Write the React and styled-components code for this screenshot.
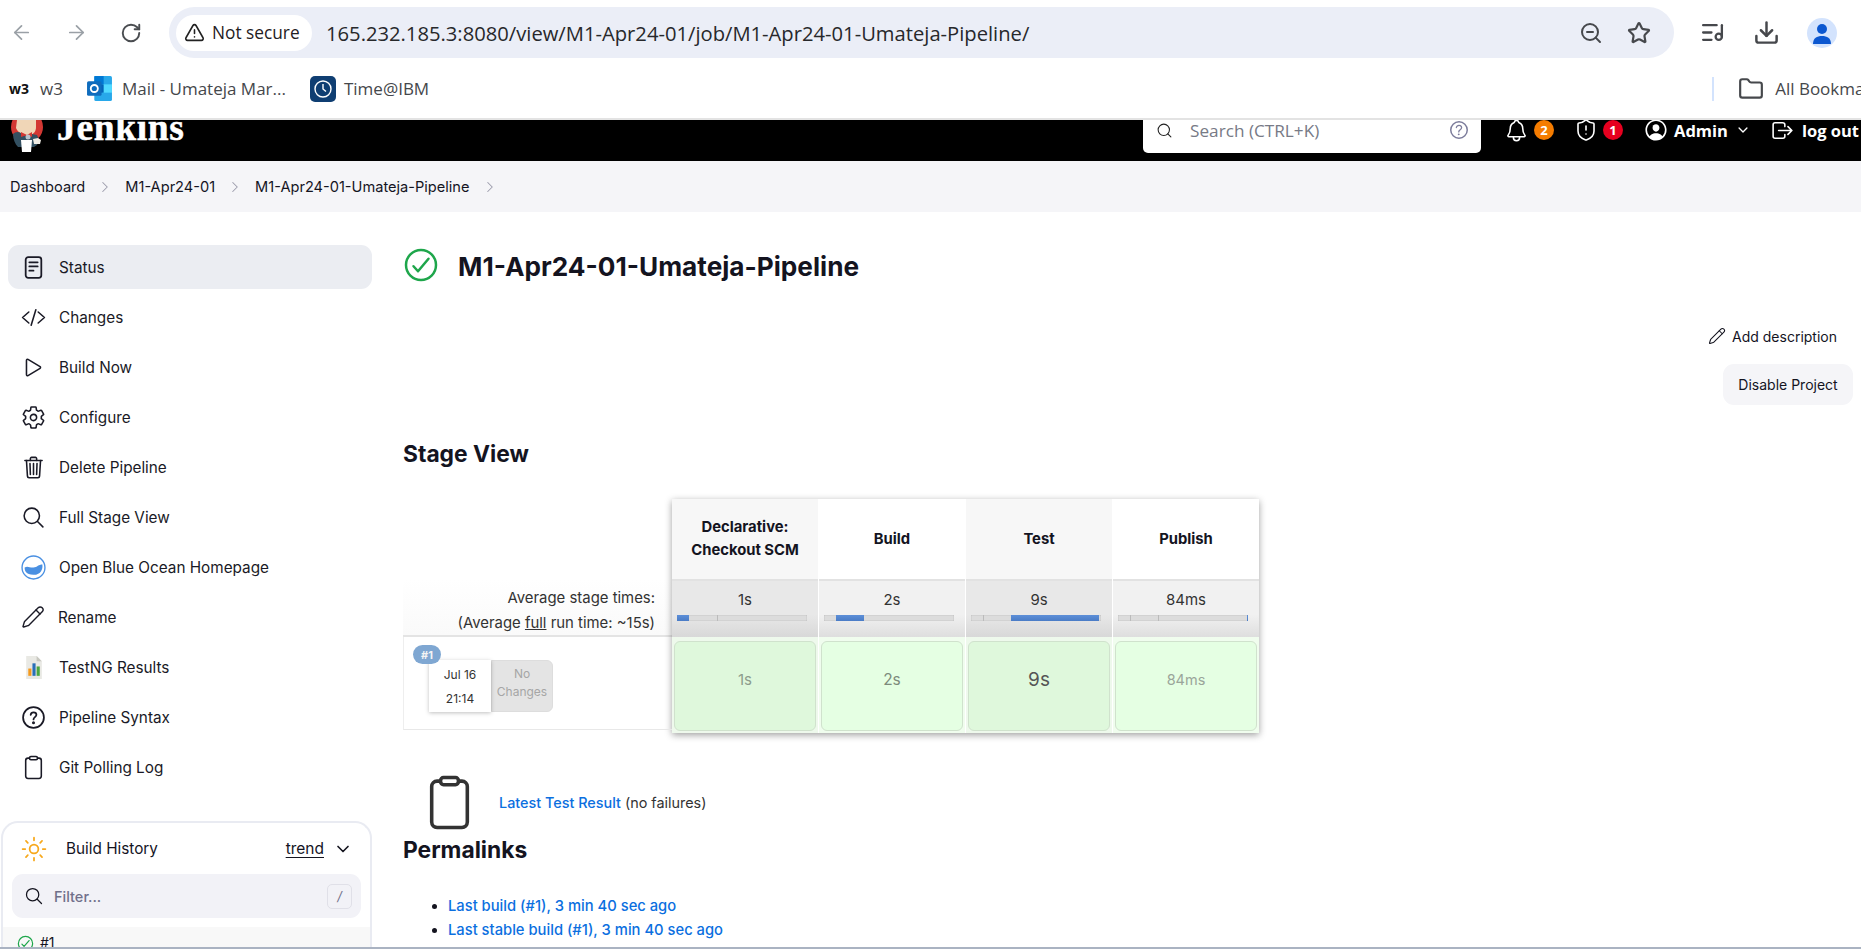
import React from "react";
import styled, { createGlobalStyle } from "styled-components";
import { ArrowLeft, ArrowRight, RotateCw, ZoomOut, Star, ListMusic, Download, TriangleAlert, Folder, Search as LSearch, ChevronDown, ChevronRight, Pencil, ShieldAlert } from "lucide-react";
import {
  IoCodeSlashOutline, IoPlayOutline, IoSettingsOutline, IoTrashOutline, IoSearchOutline,
  IoHelpCircleOutline, IoClipboardOutline, IoSunnyOutline, IoCheckmarkCircleOutline,
  IoNotificationsOutline, IoPersonCircleOutline, IoLogOutOutline, IoChevronDownOutline,
} from "react-icons/io5";

const Global = createGlobalStyle`
  html, body { margin: 0; padding: 0; background: #fff; overflow: hidden; }
  * { box-sizing: border-box; }
`;
const Page = styled.div`
  width: 1861px; height: 949px; overflow: hidden; display: flex; flex-direction: column;
  font-family: Inter, "Noto Sans", sans-serif; color: #14141f; background: #fff;
`;
const Toolbar = styled.div`
  height: 69px; flex: none; display: flex; align-items: center; padding: 0 0 4px 9px; color: #5f6368;
`;
const NavBtn = styled.span`
  display: flex; width: 25px; justify-content: center; margin-right: ${p => p.$gap}px;
  color: ${p => p.$dim ? "#9aa0a6" : "#4a4d51"};
`;
const AddressBar = styled.div`
  width: 1505px; height: 51px; margin-left: 26px; background: #ebeef7; border-radius: 26px; flex: none;
  display: flex; align-items: center; padding: 0 23px 0 7px;
`;
const SecurePill = styled.span`
  height: 36px; width: 136px; flex: none; border-radius: 18px; background: #fff; display: flex; align-items: center; gap: 7px;
  padding-left: 8px; font: 500 17.3px "Open Sans", sans-serif; color: #1f2023; white-space: nowrap;
`;
const Url = styled.span`
  margin-left: 14px; font: 400 20.2px "Open Sans", sans-serif; color: #27282b; flex: 1; white-space: nowrap;
`;
const BarIcon = styled.span`
  display: flex; margin-left: ${p => p.$ml || 0}px; color: #46484c;
`;
const Avatar = styled.span`
  width: 30px; height: 30px; border-radius: 50%; margin-left: 27px; background: #d3e3fd; display: flex; align-items: center; justify-content: center; overflow: hidden;
`;
const Bookmarks = styled.div`
  height: 51px; flex: none; display: flex; align-items: center; padding: 0 0 10px 9px; border-bottom: 2px solid #e3e3e3;
  font: 400 17px "Open Sans", sans-serif; color: #45474b; white-space: nowrap; overflow: hidden;
`;
const W3Icon = styled.span` font: 700 14px "Open Sans", sans-serif; color: #111; `;
const BookmarkText = styled.span` margin-left: ${p => p.$ml}px; flex: none; `;
const Separator = styled.span` width: 2px; height: 24px; background: #d3e3fd; margin-left: 1283px; flex: none; `;
const MailIcon = styled.svg` margin-left: 23px; flex: none; `;
const TimeIcon = styled.span`
  width: 26px; height: 26px; margin-left: 24px; background: #0f3e72; border-radius: 5px; display: flex; align-items: center; justify-content: center; flex: none;
`;

const Header = styled.div`
  height: 41px; flex: none; background: #000; display: flex; align-items: flex-start; overflow: hidden; color: #fff; position: relative;
`;
const LogoBox = styled.span` margin-left: 8px; width: 38px; flex: none; display: flex; `;
const Brand = styled.span`
  font: 700 37.5px "Liberation Serif", serif; margin: -11px 0 0 11px; width: 131px; flex: none; letter-spacing: .65px; line-height: 38px; -webkit-text-stroke: .5px #fff; white-space: nowrap;
`;
const SearchBox = styled.div`
  width: 338px; height: 33px; flex: none; margin-left: 955px; background: #fff; border-radius: 0 0 5px 5px; color: #6b6b7d;
  display: flex; align-items: center; padding: 0 10px 13px 13px; font-size: 16.5px;
`;
const SearchText = styled.span` margin-left: 17px; flex: 1; font-family: "Open Sans", sans-serif; font-size: 17.2px; color: #777a86; `;
const HeadGroup = styled.div` display: flex; align-items: center; height: 20px; white-space: nowrap; `;
const HeadItem = styled.span`
  height: 20px; display: flex; align-items: center; font: 700 16.5px "Open Sans", sans-serif; margin-left: ${p => p.$ml || 0}px;
`;
const HeadLabel = styled.span` margin-left: ${p => p.$ml}px; `;
const Badge = styled.span`
  width: 20px; height: 20px; border-radius: 50%; background: ${p => p.$c}; display: flex; align-items: center; justify-content: center;
  font: 700 13px "Open Sans", sans-serif; color: #fff; margin-left: 5px;
`;

const Crumbs = styled.div`
  height: 51px; flex: none; background: #f5f5f8; display: flex; align-items: center; padding-left: 10px; font-size: 14.6px; color: #14141f;
`;
const CrumbArrow = styled.span` display: flex; margin: 0 11px 0 11px; color: #9c9cac; `;
const Body = styled.div`
  flex: 1; min-height: 0; display: flex; overflow: hidden; border-bottom: 2px solid #aab3c2;
`;
const Sidebar = styled.nav`
  width: 403px; flex: none; padding: 33px 31px 0 1px; display: flex; flex-direction: column;
`;
const NavList = styled.div` display: flex; flex-direction: column; gap: 6px; padding-left: 7px; `;
const NavRow = styled.div`
  height: 44px; border-radius: 11px; display: flex; align-items: center; padding-left: 13px; gap: 13px;
  font-size: 15.3px; font-weight: 400; background: ${p => p.$active ? "#ebedf2" : "transparent"}; color: #1a1a26;
  svg { flex: none; }
`;
const HistoryCard = styled.div`
  margin-top: 32px; border: 2px solid #e9ebf2; border-bottom: 0; border-radius: 17px 17px 0 0; height: 140px; overflow: hidden;
`;
const HistoryHead = styled.div`
  height: 51px; display: flex; align-items: center; padding-left: 17px; font-size: 15.3px; font-weight: 400;
`;
const HistoryTitle = styled.span` margin-left: 18px; flex: 1; `;
const Trend = styled.span` text-decoration: underline; text-underline-offset: 3px; margin-right: 9px; font-size: 15.5px; `;
const Chevron = styled.span` display: flex; margin-right: 17px; `;
const FilterBox = styled.div`
  margin: 0 9px; height: 44px; background: #f2f2f7; border-radius: 11px; display: flex; align-items: center; padding: 0 9px 0 12px;
`;
const FilterText = styled.span` margin-left: 10px; flex: 1; font-size: 14.5px; font-weight: 500; color: #70708a; `;
const SlashKey = styled.span`
  width: 25px; height: 25px; border: 1px solid #e0e0e8; border-radius: 5px; display: flex; align-items: center; justify-content: center; color: #70708a; font-size: 13px; font-style: italic;
`;
const HistoryRow = styled.div`
  margin-top: 9px; height: 40px; background: #f8f8f8; display: flex; align-items: flex-start; padding: 7px 0 0 13px; gap: 5px; font-size: 14px;
`;
const Main = styled.main` flex: 1; min-width: 0; padding: 34px 8px 0 0; display: flex; flex-direction: column; `;
const TitleRow = styled.div` display: flex; align-items: center; margin-left: -2px; height: 38px; gap: 17px; `;
const Title = styled.h1` margin: 0; font-size: 26.2px; font-weight: 700; color: #14141f; white-space: nowrap; padding-top: 2px; `;
const ActionCol = styled.div` display: flex; flex-direction: column; align-items: flex-end; margin-top: 40px; `;
const AddDesc = styled.div` display: flex; align-items: center; gap: 6px; font-size: 14px; font-weight: 400; margin-right: 16px; height: 24px; `;
const DisableBtn = styled.div`
  width: 130px; height: 41px; margin-top: 16px; border-radius: 11px; background: #f5f5f8; display: flex; align-items: center; justify-content: center; font-size: 14px; font-weight: 400;
`;
const SectionTitle = styled.h2`
  margin: ${p => p.$m}; font-size: 22.8px; font-weight: 700; line-height: 26px; color: #14141f;
`;
const StageWrap = styled.div` display: flex; margin-top: 32px; align-items: flex-start; `;
const LabelCol = styled.div` width: 269px; flex: none; padding-top: 80px; `;
const AvgLabel = styled.div`
  height: 58px; text-align: right; padding: 7px 17px 0 0; font-size: 14.9px; line-height: 25px; color: #333;
  border-bottom: 2px solid #e4e4e4; background: linear-gradient(#fff, #fafafa);
  span { text-decoration: underline; }
`;
const RunLabel = styled.div`
  height: 93px; border-left: 1px solid #eee; border-bottom: 1px solid #e8e8e8; position: relative; display: flex; padding: 23px 0 0 25px;
`;
const RunBadge = styled.span`
  position: absolute; left: 9px; top: 8px; width: 28px; height: 19px; border-radius: 10px; background: #7fa7d2; color: #f4f4f4; font-size: 11px; font-weight: 700;
  display: flex; align-items: center; justify-content: center; z-index: 1;
`;
const DateBox = styled.div`
  width: 62px; height: 52px; background: #fff; box-shadow: 0 1px 4px rgba(0,0,0,.25); font-size: 12px; color: #333; text-align: center;
  display: flex; flex-direction: column; justify-content: space-around; padding: 2px 0; z-index: 0;
`;
const NoChanges = styled.div`
  width: 62px; height: 52px; background: #e4e4e4; border: 1px solid #ddd; border-radius: 0 6px 6px 0; color: #a6a6a6; font-size: 12px; line-height: 18px; text-align: center; padding-top: 4px;
`;
const StageTable = styled.div`
  display: grid; grid-template-columns: repeat(4, 146px); column-gap: 1px; flex: none; width: 587px;
  box-shadow: 0 2px 7px rgba(0,0,0,.38); background: #fff;
`;
const StageCol = styled.div` display: flex; flex-direction: column; background: ${p => p.$alt ? "#eef9ec" : "#f0fdee"}; `;
const StageHead = styled.div`
  height: 80px; background: ${p => p.$alt ? "#f7f7f7" : "#fff"}; display: flex; align-items: center; justify-content: center; text-align: center;
  font-size: 14.8px; font-weight: 700; line-height: 23px; padding: 0 8px; color: #14141f;
`;
const StageAvg = styled.div`
  height: 58px; background: ${p => p.$alt ? "linear-gradient(#e8e8e8 60%, #d8d8d8)" : "linear-gradient(#f1f1f1 60%, #dedede)"};
  border-top: 2px solid #e2e2e2; text-align: center; font-size: 15px; line-height: 20px; padding-top: 9px; color: #333; position: relative;
`;
const Progress = styled.div`
  position: absolute; left: 5px; right: 11px; top: 34px; height: 6px; background: #dcdcdc; box-shadow: inset 0 0 1px rgba(0,0,0,.45);
`;
const ProgressFill = styled.span`
  position: absolute; top: 0; bottom: 0; left: ${p => p.$l}px; width: ${p => p.$w}px; background: linear-gradient(#5d8fd8, #4a7cc6);
`;
const ProgressTick = styled.span`
  position: absolute; top: 0; bottom: 0; left: ${p => p.$l}px; width: 1px; background: #bbb;
`;
const StageCellWrap = styled.div` height: 96px; padding: 4px 2px 2px; `;
const StageCell = styled.div`
  height: 100%; border-radius: 6px; border: 1px solid #d0e2cd; background: ${p => p.$alt ? "#dff8dc" : "#e5ffe3"}; color: ${p => p.$c};
  font-size: ${p => p.$fs}px; display: flex; justify-content: center; padding-top: ${p => p.$pt}px;
`;
const ResultRow = styled.div` display: flex; align-items: center; margin: 44px 0 0 18px; height: 50px; font-size: 14.4px; color: #333; `;
const ResultLink = styled.a` color: #0b6fe0; font-weight: 500; margin-left: 21px; margin-right: 4px; `;
const LinkList = styled.ul` margin: 31px 0 0; padding: 0 0 0 45px; font-size: 14.75px; line-height: 24px; `;
const LinkItem = styled.li` a { color: #0b6fe0; font-weight: 500; } `;

const stages = [
  { name: <>Declarative:<br />Checkout SCM</>, time: "1s", alt: true, fill: [0, 12], ticks: [40], color: "#8d9c8c", fs: 15, pt: 28 },
  { name: "Build", time: "2s", alt: false, fill: [12, 28], ticks: [], color: "#7d8b7c", fs: 15.5, pt: 28 },
  { name: "Test", time: "9s", alt: true, fill: [40, 88], ticks: [12], color: "#555", fs: 19, pt: 26 },
  { name: "Publish", time: "84ms", alt: false, fill: [128, 1], ticks: [12, 40], color: "#9aa59a", fs: 14.5, pt: 29 },
];
const StatusIcon = ({ size }) => (
  <svg width={size} height={size} viewBox="0 0 24 24" fill="none" stroke="#1a1a26" strokeWidth="1.7" strokeLinecap="round">
    <rect x="4.5" y="2" width="15" height="20" rx="2.5" /><path d="M8 7h8M8 11h8M8 15h4" />
  </svg>
);
const nav = [
  [StatusIcon, "Status"], [IoCodeSlashOutline, "Changes"], [IoPlayOutline, "Build Now"], [IoSettingsOutline, "Configure"],
  [IoTrashOutline, "Delete Pipeline"], [IoSearchOutline, "Full Stage View"], ["ocean", "Open Blue Ocean Homepage"], ["pencil", "Rename"],
  ["testng", "TestNG Results"], ["help", "Pipeline Syntax"], [IoClipboardOutline, "Git Polling Log"],
];

const OceanIcon = () => (
  <svg width="25" height="25" viewBox="0 0 24 24"><circle cx="12" cy="12" r="11" fill="#fff" stroke="#4a90e2" strokeWidth="1.3"/><path d="M3.5 12c3-2 5 .5 8.5 0s5-3 8.5-3c.6 4-1 10-8.5 10S3.5 15 3.5 12z" fill="#4a90e2"/></svg>
);
const TestNgIcon = () => (
  <svg width="25" height="25" viewBox="0 0 24 24"><path d="M5 1h10l5 5v17H5z" fill="#e9e9e4"/><path d="M15 1l5 5h-5z" fill="#c8c8c0"/><rect x="7" y="13" width="3" height="7" fill="#f59a1d"/><rect x="11" y="8" width="3" height="12" fill="#2a6fb8"/><rect x="15" y="11" width="3" height="9" fill="#4aa640"/></svg>
);
const HelpIcon = () => (
  <svg width="25" height="25" viewBox="0 0 24 24" fill="none" stroke="#1a1a26" strokeWidth="1.7" strokeLinecap="round">
    <circle cx="12" cy="12" r="10" /><path d="M9.3 9.4c.2-1.6 1.4-2.4 2.8-2.4 1.5 0 2.7 1 2.7 2.4 0 2.2-2.8 2.3-2.8 4.4" /><circle cx="12" cy="17" r=".6" fill="#1a1a26" />
  </svg>
);
const JenkinsLogo = () => (
  <svg width="38" height="38" viewBox="0 0 38 38">
    <circle cx="19" cy="7" r="16" fill="#d33833"/>
    <path d="M8 8c2 5 8 8 14 7 4-1 6-4 6-8V0H9z" fill="#f0d6b7"/>
    <path d="M5 14c2-2 5-3 8-1l5 3 6-2 5 1c2 3 2 7 0 10l-3 2H10c-3-3-5-8-5-13z" fill="#335061"/>
    <path d="M13 12l6 3 5-3v5l-5-2-6 2z" fill="#d33833"/>
    <circle cx="20" cy="17" r="2.5" fill="#b8c4cc"/>
    <path d="M13 20h11l-1 12h-9z" fill="#fff"/>
    <path d="M25 19l5-1 3 2-1 4-6 0z" fill="#f0ece4"/>
  </svg>
);

const navIcon = Icon => {
  if (Icon === "ocean") return <OceanIcon />;
  if (Icon === "testng") return <TestNgIcon />;
  if (Icon === "help") return <HelpIcon />;
  if (Icon === "pencil") return <Pencil size={24} strokeWidth={1.4} />;
  return <Icon size={25} />;
};

export default function App() {
  return (
    <Page>
      <Global />
      <Toolbar>
        <NavBtn $dim $gap={30}><ArrowLeft size={23} strokeWidth={1.8} /></NavBtn>
        <NavBtn $dim $gap={29}><ArrowRight size={23} strokeWidth={1.8} /></NavBtn>
        <NavBtn $gap={0}><RotateCw size={22} strokeWidth={2.1} /></NavBtn>
        <AddressBar>
          <SecurePill><TriangleAlert size={21} color="#222" strokeWidth={1.8} />Not secure</SecurePill>
          <Url>165.232.185.3:8080/view/M1-Apr24-01/job/M1-Apr24-01-Umateja-Pipeline/</Url>
          <BarIcon><ZoomOut size={24} strokeWidth={2} /></BarIcon>
          <BarIcon $ml={24}><Star size={24} strokeWidth={2.2} /></BarIcon>
        </AddressBar>
        <BarIcon $ml={26}><ListMusic size={25} strokeWidth={2.2} /></BarIcon>
        <BarIcon $ml={28}><Download size={27} strokeWidth={2.2} /></BarIcon>
        <Avatar>
          <svg width="30" height="30" viewBox="0 0 30 30"><circle cx="15" cy="11" r="5" fill="#0b57d0"/><path d="M6 26c0-6 4-8 9-8s9 2 9 8z" fill="#0b57d0"/></svg>
        </Avatar>
      </Toolbar>
      <Bookmarks>
        <W3Icon>w3</W3Icon>
        <BookmarkText $ml={11}>w3</BookmarkText>
        <MailIcon width="27" height="27" viewBox="0 0 24 26">
          <rect x="7" y="1" width="17" height="24" rx="1.5" fill="#28a8ea"/><rect x="7" y="1" width="9" height="8" fill="#0078d4"/><rect x="15" y="9" width="9" height="8" fill="#50d9ff"/><rect x="7" y="9" width="9" height="8" fill="#0364b8"/><rect x="0" y="6" width="14" height="14" rx="1.5" fill="#0f6cbd"/><circle cx="7" cy="13" r="3.4" fill="none" stroke="#fff" strokeWidth="1.8"/>
        </MailIcon>
        <BookmarkText $ml={9}>Mail - Umateja Mar...</BookmarkText>
        <TimeIcon>
          <svg width="20" height="20" viewBox="0 0 20 20" fill="none" stroke="#fff" strokeWidth="1.4"><circle cx="10" cy="10" r="8"/><path d="M10 5v5l3 2.5"/></svg>
        </TimeIcon>
        <BookmarkText $ml={8}>Time@IBM</BookmarkText>
        <Separator />
        <BarIcon $ml={24}><Folder size={26} strokeWidth={2} /></BarIcon>
        <BookmarkText $ml={11}>All Bookmarks</BookmarkText>
      </Bookmarks>
      <Header>
        <LogoBox><JenkinsLogo /></LogoBox>
        <Brand>Jenkins</Brand>
        <SearchBox>
          <LSearch size={17} strokeWidth={1.5} color="#222" />
          <SearchText>Search (CTRL+K)</SearchText>
          <IoHelpCircleOutline size={24} color="#7d7d9c" />
        </SearchBox>
        <HeadGroup>
          <HeadItem $ml={23}><IoNotificationsOutline size={25} /><Badge $c="#f57c00">2</Badge></HeadItem>
          <HeadItem $ml={20}><ShieldAlert size={24} strokeWidth={1.6} /><Badge $c="#e6001f">1</Badge></HeadItem>
          <HeadItem $ml={20}><IoPersonCircleOutline size={26} /><HeadLabel $ml={5}>Admin</HeadLabel></HeadItem>
          <HeadItem $ml={8}><IoChevronDownOutline size={14} /></HeadItem>
          <HeadItem $ml={20}><IoLogOutOutline size={25} /><HeadLabel $ml={7}>log out</HeadLabel></HeadItem>
        </HeadGroup>
      </Header>
      <Crumbs>
        Dashboard<CrumbArrow><ChevronRight size={18} strokeWidth={1.4} /></CrumbArrow>
        M1-Apr24-01<CrumbArrow><ChevronRight size={18} strokeWidth={1.4} /></CrumbArrow>
        M1-Apr24-01-Umateja-Pipeline<CrumbArrow><ChevronRight size={18} strokeWidth={1.4} /></CrumbArrow>
      </Crumbs>
      <Body>
        <Sidebar>
          <NavList>
            {nav.map(([Icon, label], i) => (
              <NavRow key={label} $active={i === 0}>
                {navIcon(Icon)}
                {label}
              </NavRow>
            ))}
          </NavList>
          <HistoryCard>
            <HistoryHead>
              <IoSunnyOutline size={28} color="#f7a81b" />
              <HistoryTitle>Build History</HistoryTitle>
              <Trend>trend</Trend>
              <Chevron><ChevronDown size={20} strokeWidth={2} /></Chevron>
            </HistoryHead>
            <FilterBox>
              <IoSearchOutline size={20} />
              <FilterText>Filter...</FilterText>
              <SlashKey>/</SlashKey>
            </FilterBox>
            <HistoryRow><IoCheckmarkCircleOutline size={19} color="#1ea64b" />#1</HistoryRow>
          </HistoryCard>
        </Sidebar>
        <Main>
          <TitleRow>
            <IoCheckmarkCircleOutline size={40} color="#1ea64b" />
            <Title>M1-Apr24-01-Umateja-Pipeline</Title>
          </TitleRow>
          <ActionCol>
            <AddDesc><Pencil size={18} strokeWidth={1.4} />Add description</AddDesc>
            <DisableBtn>Disable Project</DisableBtn>
          </ActionCol>
          <SectionTitle $m="36px 0 0">Stage View</SectionTitle>
          <StageWrap>
            <LabelCol>
              <AvgLabel>Average stage times:<br />(Average <span>full</span> run time: ~15s)</AvgLabel>
              <RunLabel>
                <RunBadge>#1</RunBadge>
                <DateBox><div>Jul 16</div><div>21:14</div></DateBox>
                <NoChanges>No<br />Changes</NoChanges>
              </RunLabel>
            </LabelCol>
            <StageTable>
              {stages.map(s => (
                <StageCol key={s.time} $alt={s.alt}>
                  <StageHead $alt={s.alt}>{s.name}</StageHead>
                  <StageAvg $alt={s.alt}>
                    {s.time}
                    <Progress>
                      {s.ticks.map(t => <ProgressTick key={t} $l={t} />)}
                      <ProgressFill $l={s.fill[0] > 127 ? 129 : s.fill[0]} $w={s.fill[1]} />
                    </Progress>
                  </StageAvg>
                  <StageCellWrap>
                    <StageCell $alt={s.alt} $c={s.color} $fs={s.fs} $pt={s.pt}>{s.time}</StageCell>
                  </StageCellWrap>
                </StageCol>
              ))}
            </StageTable>
          </StageWrap>
          <ResultRow>
            <IoClipboardOutline size={57} />
            <ResultLink>Latest Test Result</ResultLink>(no failures)
          </ResultRow>
          <SectionTitle $m="10px 0 0">Permalinks</SectionTitle>
          <LinkList>
            <LinkItem><a>Last build (#1), 3 min 40 sec ago</a></LinkItem>
            <LinkItem><a>Last stable build (#1), 3 min 40 sec ago</a></LinkItem>
          </LinkList>
        </Main>
      </Body>
    </Page>
  );
}
